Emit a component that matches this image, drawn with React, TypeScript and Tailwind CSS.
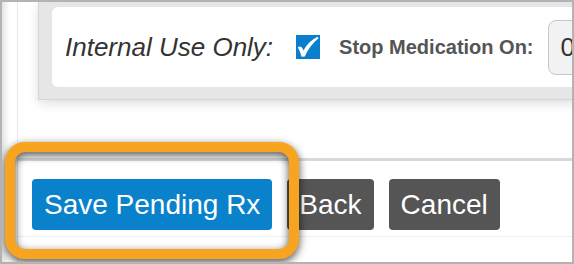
export default function App() {
  return (
    <div className="relative flex h-[264px] w-[574px] overflow-hidden border-2 border-[#b3b3b3] bg-white font-['Liberation_Sans',Arial,sans-serif]">
      {/* page gutter */}
      <div className="w-[15px] shrink-0 bg-gradient-to-r from-[#e4e4e4] via-white via-50% to-white" />
      <div className="flex min-w-0 flex-1 flex-col border-l border-[#e8e8e8]">
        {/* form panel */}
        <div className="pl-[20px]">
          <div className="-mr-[60px] -mt-px border-b border-l border-[#d5d5d5] bg-[#e6e6e6] pb-[12px] pl-[13px] pt-[6px] shadow-[0_4px_10px_rgba(0,0,0,0.12)]">
            <div className="flex h-[80px] items-center rounded-l-[6px] bg-white pl-[13px]">
              <span className="whitespace-nowrap text-[26px] italic text-[#333]">Internal Use Only:</span>
              <span className="ml-[23px] shrink-0">
                <svg width="24" height="24" viewBox="0 0 24 24">
                  <rect width="24" height="24" fill="#0a80cc" />
                  <path
                    d="M1.8 12.4 C3.6 10.8 5.4 11.4 6.6 13.8 L7.4 15.4 C11 9.2 15.6 4.6 21.6 1.8 L22.6 3.2 C16.8 8 12.2 13.8 8.8 21.4 L5.6 21.8 C4.6 18 3.4 15 1.8 12.4 Z"
                    fill="#fff"
                  />
                </svg>
              </span>
              <span className="ml-[19px] whitespace-nowrap text-[20px] font-bold text-[#555]">Stop Medication On:</span>
              <div className="ml-[14px] flex h-[55px] w-[90px] shrink-0 items-center rounded-[8px] border border-[#c8c8c8] bg-[#f2f2f2] pl-[12px] text-[26px] text-[#333]">
                0
              </div>
            </div>
          </div>
        </div>

        <div className="mt-[58px] h-[3px] bg-[#d9d9d9]" />

        {/* footer buttons */}
        <div className="flex gap-[15px] border-b border-[#eeeeee] pb-[6px] pl-[14px] pt-[18px]">
          <button className="h-[51px] rounded-[4px] bg-[#0a82cb] px-[12px] text-[28px] text-white">Save Pending Rx</button>
          <button className="h-[51px] rounded-[4px] bg-[#555] px-[12px] text-[28px] text-white">Back</button>
          <button className="h-[51px] rounded-[4px] bg-[#555] px-[12px] text-[28px] text-white">Cancel</button>
        </div>
      </div>

      {/* highlight ring */}
      <div className="pointer-events-none absolute left-[3px] top-[140px] h-[117px] w-[294px] rounded-[20px] border-[10px] border-[#f7a521] drop-shadow-[0_3px_4px_rgba(0,0,0,0.7)]" />
    </div>
  );
}
